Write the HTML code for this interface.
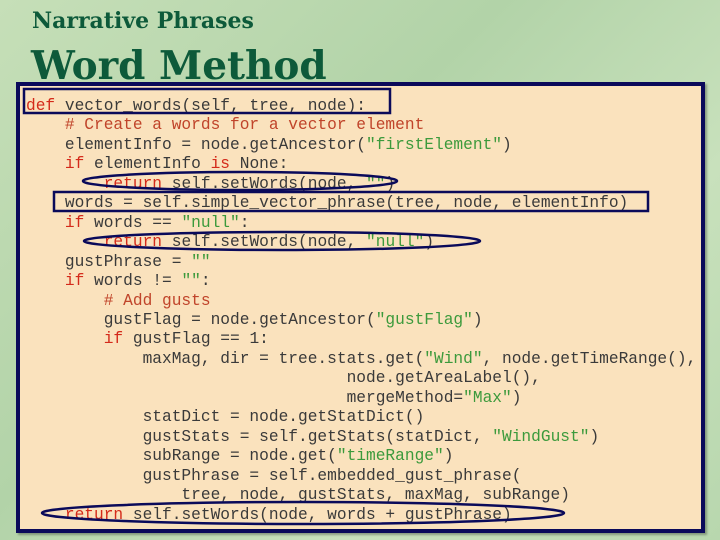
<!DOCTYPE html>
<html><head><style>
body{margin:0;width:720px;height:540px;overflow:hidden;background:linear-gradient(135deg,#c6dfb8,#b2d3a8 40%,#c8e1bc 70%,#b8d7ae);position:relative;font-family:"Liberation Sans",sans-serif}
.t1{position:absolute;left:32px;top:8px;font:bold 22px "DejaVu Serif",serif;color:#0d5a3a;white-space:nowrap}
.t2{position:absolute;left:31px;top:43px;font:bold 39px "DejaVu Serif",serif;color:#0d5a3a;white-space:nowrap}
.box{position:absolute;left:16px;top:82px;width:681px;height:443px;background:#fae2bd;border:4px solid #0a0a5a;box-shadow:2px 2px 2px rgba(0,0,0,.3)}
pre{position:absolute;left:26px;top:97px;margin:0;font:16.2px/19.45px "Liberation Mono",monospace;color:#3a3a3a;}
.k{color:#d42a1a}.s{color:#3c9a3c}.c{color:#c0442a}
svg{position:absolute;left:0;top:0}
</style></head><body>
<div class="t1">Narrative Phrases</div>
<div class="t2">Word Method</div>
<div class="box"></div>
<pre><span class="k">def</span> vector_words(self, tree, node):
    <span class="c"># Create a words for a vector element</span>
    elementInfo = node.getAncestor(<span class="s">"firstElement"</span>)
    <span class="k">if</span> elementInfo <span class="k">is</span> None:
        <span class="k">return</span> self.setWords(node, <span class="s">""</span>)
    words = self.simple_vector_phrase(tree, node, elementInfo)
    <span class="k">if</span> words == <span class="s">"null"</span>:
        <span class="k">return</span> self.setWords(node, <span class="s">"null"</span>)
    gustPhrase = <span class="s">""</span>
    <span class="k">if</span> words != <span class="s">""</span>:
        <span class="c"># Add gusts</span>
        gustFlag = node.getAncestor(<span class="s">"gustFlag"</span>)
        <span class="k">if</span> gustFlag == 1:
            maxMag, dir = tree.stats.get(<span class="s">"Wind"</span>, node.getTimeRange(),
                                 node.getAreaLabel(),
                                 mergeMethod=<span class="s">"Max"</span>)
            statDict = node.getStatDict()
            gustStats = self.getStats(statDict, <span class="s">"WindGust"</span>)
            subRange = node.get(<span class="s">"timeRange"</span>)
            gustPhrase = self.embedded_gust_phrase(
                tree, node, gustStats, maxMag, subRange)
    <span class="k">return</span> self.setWords(node, words + gustPhrase)</pre>
<svg width="720" height="540">
<g fill="none" stroke="#0a0a5a" stroke-width="2.5">
<rect x="24" y="89" width="366" height="24"/>
<rect x="54" y="192" width="594" height="19"/>
<ellipse cx="240" cy="181" rx="157" ry="9"/>
<ellipse cx="282" cy="241" rx="198" ry="9"/>
<ellipse cx="303" cy="513" rx="261" ry="11"/>
</g></svg>
</body></html>
